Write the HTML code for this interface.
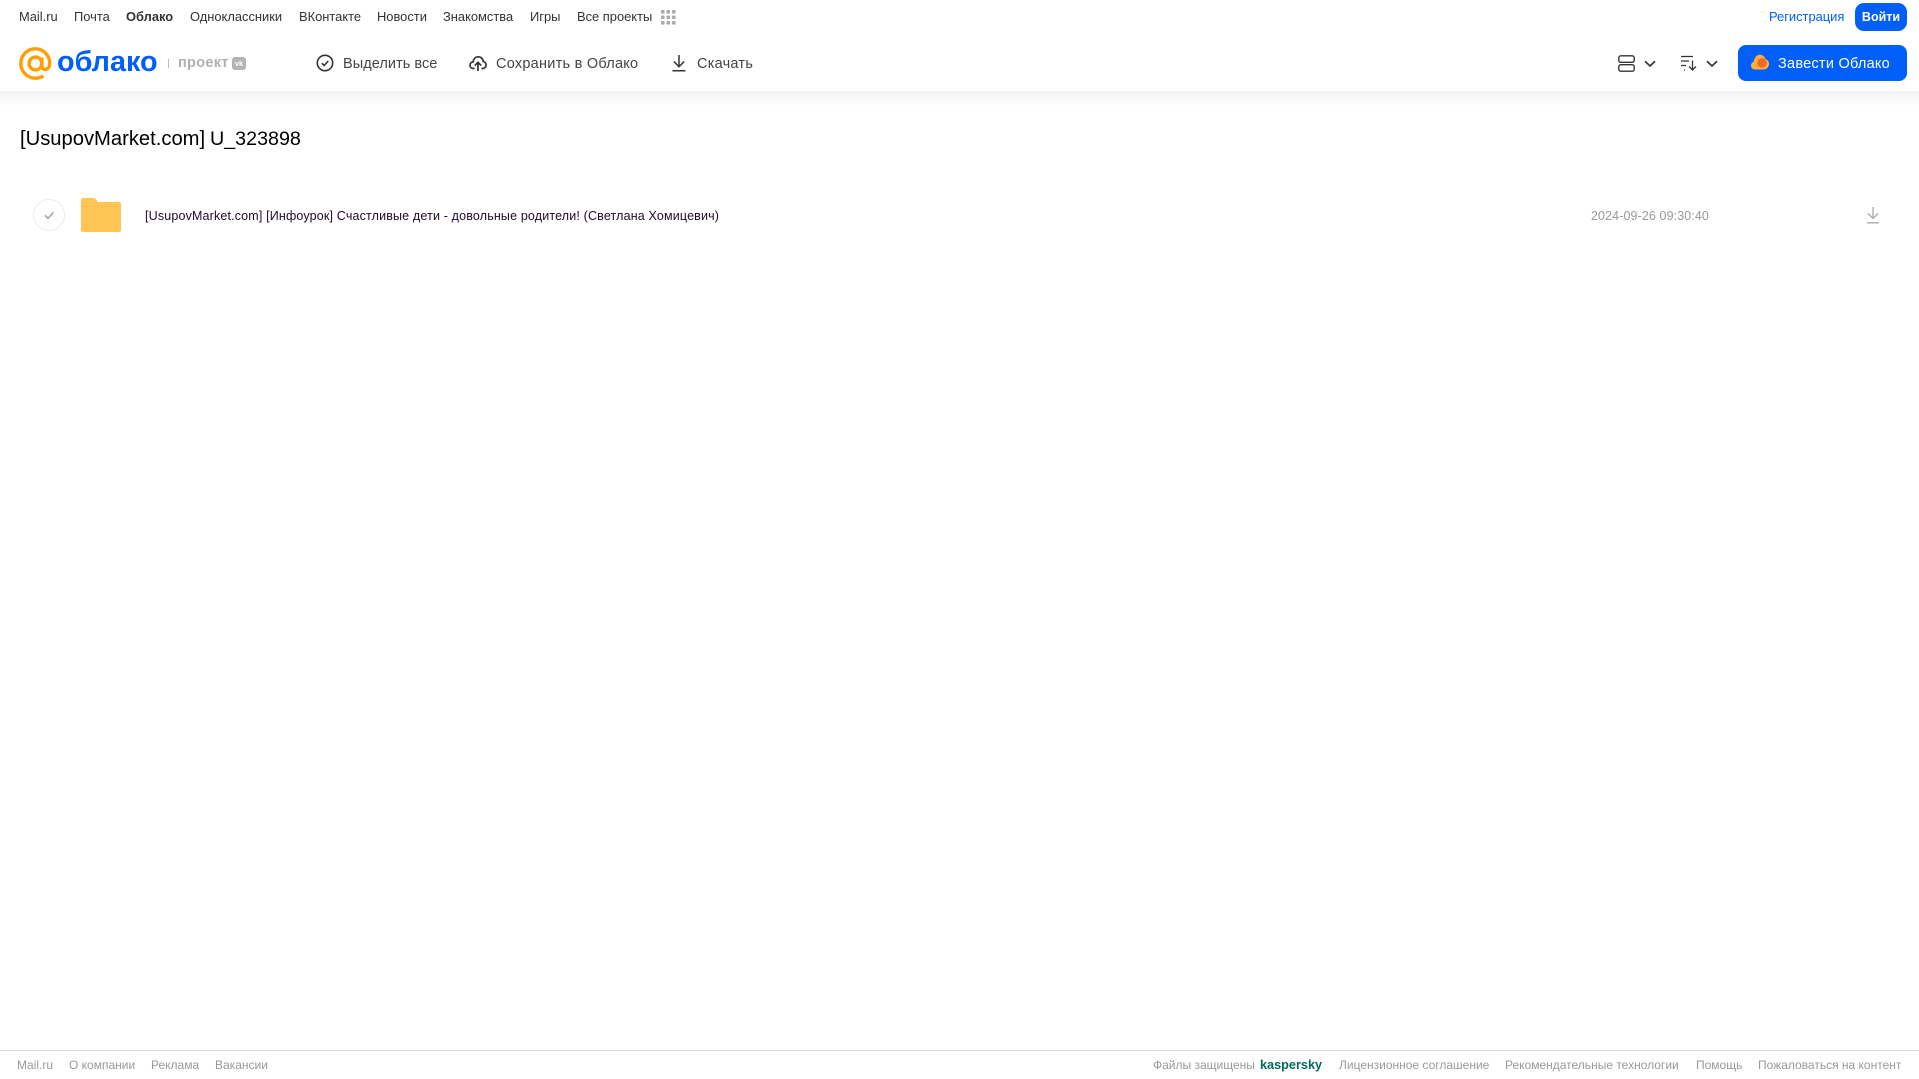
<!DOCTYPE html>
<html lang="ru"><head><meta charset="utf-8"><title>Облако</title>
<style>
html,body{margin:0;padding:0;background:#fff;width:1919px;height:1079px;overflow:hidden;font-family:"Liberation Sans","DejaVu Sans",sans-serif}
.t{position:absolute;white-space:nowrap;line-height:16px}
.n{top:9px;font-size:12.9px;color:#333}
.a{top:56px;font-size:14.5px;color:#444;letter-spacing:.25px}
.f{top:1057px;font-size:12px;color:#999}
svg{position:absolute;overflow:visible}
#sh{position:absolute;left:0;top:91px;width:1919px;height:16px;background:linear-gradient(#f3f3f3,#fff)}
</style></head><body>
<div id="sh"></div>
<span class="t n" style="left:19px">Mail.ru</span>
<span class="t n" style="left:74px">Почта</span>
<span class="t n" style="left:126px;font-weight:bold">Облако</span>
<span class="t n" style="left:190px">Одноклассники</span>
<span class="t n" style="left:299px">ВКонтакте</span>
<span class="t n" style="left:377px">Новости</span>
<span class="t n" style="left:443px">Знакомства</span>
<span class="t n" style="left:530px">Игры</span>
<span class="t n" style="left:577px">Все проекты</span>
<svg style="left:661px;top:10px" width="15" height="15" fill="#aaa"><rect x="0" y="0" width="3.6" height="3.6" rx="1"/><rect x="5.5" y="0" width="3.6" height="3.6" rx="1"/><rect x="11" y="0" width="3.6" height="3.6" rx="1"/><rect x="0" y="5.5" width="3.6" height="3.6" rx="1"/><rect x="5.5" y="5.5" width="3.6" height="3.6" rx="1"/><rect x="11" y="5.5" width="3.6" height="3.6" rx="1"/><rect x="0" y="11" width="3.6" height="3.6" rx="1"/><rect x="5.5" y="11" width="3.6" height="3.6" rx="1"/><rect x="11" y="11" width="3.6" height="3.6" rx="1"/></svg>
<span class="t n" style="left:1769px;color:#005ff9">Регистрация</span>
<div style="position:absolute;left:1855px;top:3px;width:52px;height:28px;border-radius:9px;background:#005ff9;color:#fff;font-size:12.5px;font-weight:bold;text-align:center;line-height:28px">Войти</div>
<svg style="left:19px;top:47px" width="33" height="33" viewBox="0 0 33 33" fill="none" stroke="#ff9e00" stroke-width="3.4"><circle cx="16.5" cy="16.5" r="6.4"/><path d="M22.9 10.5v8.6c0 4.600 6.900 4.600 7.700-1.300 1.100-8.200-5.500-16-14.100-16C8.300 1.800 1.800 8.400 1.800 16.500s6.500 14.700 14.700 14.700c3 0 5.600-.8 7.900-2.300"/></svg>
<span class="t" style="left:57px;top:44px;line-height:36px;font-size:28.800px;color:#005ff9;font-weight:bold">облако</span>
<div style="position:absolute;left:168px;top:59px;width:1px;height:9px;background:#bbb"></div>
<span class="t" style="left:178px;top:55px;font-size:14.500px;color:#b0b0b0;font-weight:bold;letter-spacing:.3px">проект</span>
<div style="position:absolute;left:232px;top:57px;width:14px;height:13px;border-radius:3px;background:#b4b4b4;color:#fff;font-size:7.500px;font-weight:bold;line-height:13px;text-align:center">vk</div>
<svg style="left:316px;top:54px" width="18" height="18" viewBox="0 0 18 18" fill="none" stroke="#333" stroke-width="1.600"><circle cx="9" cy="9" r="7.700"/><path d="M5.800 9.200l2.300 2.300 4.200-4.500"/></svg>
<span class="t a" style="left:343px;letter-spacing:.05px">Выделить все</span>
<svg style="left:469px;top:54px" width="18" height="18" viewBox="0 0 18 18" fill="none" stroke="#333" stroke-width="1.700"><path d="M5.500 14.500H4.300C2.300 14.500 1 13 1 11.200c0-1.800 1.300-3.100 3-3.200C4.500 5 6.500 2.800 9.300 2.800c2.700 0 4.700 2 5 4.800 1.700.3 2.800 1.700 2.800 3.400 0 1.900-1.400 3.500-3.400 3.500h-1.200"/><path d="M9 17V9M5.800 11.500L9 8.300l3.200 3.200"/></svg>
<span class="t a" style="left:496px">Сохранить в Облако</span>
<svg style="left:671px;top:54px" width="16" height="18" viewBox="0 0 16 18" fill="none" stroke="#333" stroke-width="1.500"><path d="M8 1v11.500M2.800 7.500L8 12.700l5.200-5.200M1.500 16.800h13"/></svg>
<span class="t a" style="left:697px">Скачать</span>
<svg style="left:1618px;top:55px" width="17" height="17" viewBox="0 0 17 17" fill="none" stroke="#333" stroke-width="1.400"><rect x=".8" y=".8" width="15.400" height="6.500" rx="2"/><rect x=".8" y="9.700" width="15.400" height="6.500" rx="2"/></svg>
<svg style="left:1644px;top:60px" width="12" height="8" fill="none" stroke="#333" stroke-width="1.700"><path d="M1 1.200l5 4.800 5-4.800"/></svg>
<svg style="left:1681px;top:55px" width="16" height="16" viewBox="0 0 16 16" fill="none" stroke="#333" stroke-width="1.300"><path d="M0 1.500h12M0 6h8M0 10.500h5M3 15h1M11.500 5.500v9.500M8 11.500l3.500 3.500 3.500-3.500"/></svg>
<svg style="left:1706px;top:60px" width="12" height="8" fill="none" stroke="#333" stroke-width="1.700"><path d="M1 1.200l5 4.800 5-4.800"/></svg>
<div style="position:absolute;left:1738px;top:45px;width:169px;height:36px;border-radius:8px;background:#005ff9"></div>
<svg style="left:1751px;top:54px" width="18" height="17" viewBox="0 0 18 17"><path d="M4 15.500C1.800 15.500 0 13.800 0 11.500c0-1.900 1.200-3.300 2.800-3.800C3.200 3.700 5.700 .8 8.800.8c2.600 0 4.800 1.700 5.500 4.200 2.100.5 3.700 2.500 3.700 4.900 0 3.100-2.400 5.600-5.400 5.600z" fill="#ffb03a"/><circle cx="11" cy="9" r="4.800" fill="#f26a21"/></svg>
<span class="t a" style="left:1778px;color:#fff">Завести Облако</span>
<span class="t" style="left:20px;top:126px;line-height:26px;font-size:20.200px;color:#000">[UsupovMarket.com]</span>
<span class="t" style="left:210px;top:126px;line-height:26px;font-size:19.700px;color:#000">U_323898</span>
<svg style="left:33px;top:199px" width="32" height="32" viewBox="0 0 32 32" fill="none"><circle cx="16" cy="16" r="15.500" stroke="#ececec"/><path d="M12 16.300l3 3 5.500-6" stroke="#999" stroke-width="1.400"/></svg>
<svg style="left:81px;top:198px" width="40" height="34" viewBox="0 0 40 34"><path d="M2 0h10c2 0 3 .8 4 2.500L17 4h21c1.100 0 2 .9 2 2v26c0 1.100-.9 2-2 2H2c-1.100 0-2-.9-2-2V2C0 .9.900 0 2 0z" fill="#ffc655"/><rect x="0" y="8" width="40" height="1" fill="#f9bd4c"/></svg>
<span class="t" style="left:145px;top:208px;font-size:12.500px;letter-spacing:.16px;color:#1f0a2d">[UsupovMarket.com] [Инфоурок] Счастливые дети - довольные родители! (Светлана Хомицевич)</span>
<span class="t" style="left:1591px;top:208px;font-size:12.500px;letter-spacing:.1px;color:#999">2024-09-26 09:30:40</span>
<svg style="left:1866px;top:206px" width="14" height="18" viewBox="0 0 14 18" fill="none" stroke="#aaa" stroke-width="1.300"><path d="M7 1v11.500M2 7.500l5 5 5-5M1 16.800h12"/></svg>
<div style="position:absolute;left:0;top:1050px;width:1919px;height:1px;background:#d9d9d9"></div>
<span class="t f" style="left:17px">Mail.ru</span>
<span class="t f" style="left:69px">О компании</span>
<span class="t f" style="left:151px">Реклама</span>
<span class="t f" style="left:215px">Вакансии</span>
<span class="t f" style="left:1153px">Файлы защищены</span>
<span class="t f" style="left:1260px;color:#006d5c;font-weight:bold;font-size:12.700px">kaspersky</span>
<span class="t f" style="left:1339px">Лицензионное соглашение</span>
<span class="t f" style="left:1505px">Рекомендательные технологии</span>
<span class="t f" style="left:1696px">Помощь</span>
<span class="t f" style="left:1758px">Пожаловаться на контент</span>
</body></html>
